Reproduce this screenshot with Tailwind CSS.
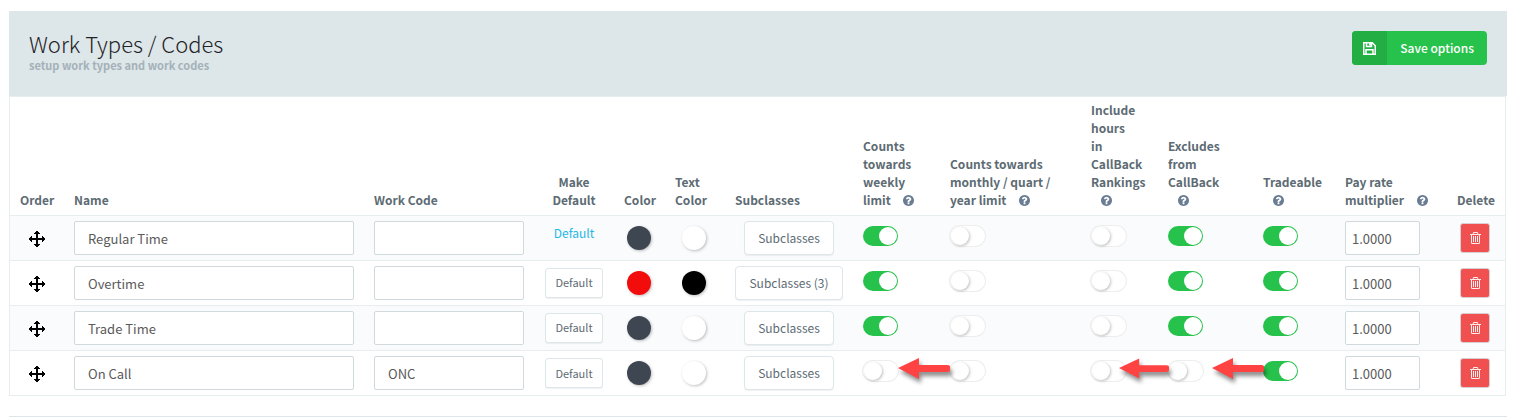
<!DOCTYPE html>
<html lang="en">
<head>
  <meta charset="UTF-8">
  <meta name="viewport" content="width=device-width, initial-scale=1.0">
  <title>Work Types / Codes</title>
  <script src="https://cdn.jsdelivr.net/npm/@tailwindcss/browser@4"></script>
</head>
<body class="bg-white font-['Source_Sans_Pro','Noto_Sans_CJK_SC',sans-serif] text-[#5d6b73] overflow-x-hidden">
  <!-- Shared icons -->
  <svg class="hidden">
    <symbol id="icon-help" viewBox="0 0 1536 1536">
      <path d="M896 1248v-192q0-14-9-23t-23-9H672q-14 0-23 9t-9 23v192q0 14 9 23t23 9h192q14 0 23-9t9-23zm256-672q0-88-55.500-163T958 297t-170-41q-243 0-371 213-15 24 8 42l132 100q7 6 19 6 16 0 25-12 53-68 86-92 34-24 86-24 48 0 85.500 26t37.500 59q0 38-20 61t-68 45q-63 28-115.500 86.500T640 892v36q0 14 9 23t23 9h192q14 0 23-9t9-23q0-19 21.500-49.500T972 829q32-18 49-28.500t46-35 44.500-48 28-60.500 12.500-81zm384 192q0 209-103 385.500T1153.500 1433 768 1536t-385.500-103T103 1153.500 0 768t103-385.500T382.500 103 768 0t385.500 103T1433 382.500 1536 768z" fill="currentColor"/>
    </symbol>
    <symbol id="icon-move" viewBox="0 0 16 16">
      <path d="M7 0h2v1h1v1h1v1H9v4h4V5h1v1h1v1h1v2h-1v1h-1v1h-1V9H9v4h2v1h-1v1H9v1H7v-1H6v-1H5v-1h2V9H3v2H2v-1H1V9H0V7h1V6h1V5h1v2h4V3H5V2h1V1h1z" fill="currentColor"/>
    </symbol>
    <symbol id="icon-trash" viewBox="0 0 11 12">
      <path d="M3.500 0h4l1 2H11v1h-1v7.500Q10 12 8.700 12H2.300Q1 12 1 10.500V3H0V2h2.500zM4 1l-.5 1h4L7 1zM2 3v8h7V3z" fill="currentColor" fill-rule="evenodd"/>
      <path d="M3 4h1v6H3zM5 4h1v6H5zM7 4h1v6H7z" fill="currentColor"/>
    </symbol>
    <symbol id="icon-arrow" viewBox="0 0 52 24">
      <path d="M0 11L21 1v7h28a3.500 3.500 0 0 1 0 7H21v7z" fill="#ff4343"/>
    </symbol>
  </svg>

  <main class="mt-[11px] ml-[9px] mr-[10px]">
    <header class="bg-[#dde6e9] h-[85px] px-5 flex items-start justify-between">
      <div class="pt-[17px]">
        <h1 class="text-[22px] leading-[30px] font-extralight text-[#1f2326]">Work Types / Codes</h1>
        <p class="text-[11px] leading-[14px] font-bold text-[#a4b1b8]">setup work types and work codes</p>
      </div>
      <button type="button" class="mt-5 h-[34px] flex rounded-[4px] overflow-hidden bg-[#27c24c] text-white text-[12px] font-medium">
        <span class="w-[35px] h-full bg-[#23ae44] flex items-center justify-center">
          <svg class="w-[13px] h-[13px]" viewBox="0 0 13 13"><path d="M.75.75h8.500l3 3v8.500H.75zM3.500 1v3.500h5V1M3 12V7.750h7V12" fill="none" stroke="currentColor" stroke-width="1.500"/><path d="M6 1h2v2.500H6z" fill="currentColor"/></svg>
        </span>
        <span class="px-[13px] leading-[34px]">Save options</span>
      </button>
    </header>

    <div class="mr-px border border-[#e8edef]">
      <table class="w-full table-fixed border-collapse">
        <colgroup>
          <col class="w-[54px]"><col class="w-[300px]"><col class="w-[170px]"><col class="w-[80px]"><col class="w-[51px]"><col class="w-[60px]"><col class="w-[128px]"><col class="w-[87px]"><col class="w-[141px]"><col class="w-[77px]"><col class="w-[95px]"><col class="w-[82px]"><col class="w-[112px]"><col class="w-[58px]">
        </colgroup>
        <thead>
          <tr class="h-[118px] text-left align-bottom text-[12px] leading-[18px] whitespace-nowrap">
            <th class="px-[10px] pb-[6px] font-bold">Order</th>
            <th class="px-[10px] pb-[6px] font-bold">Name</th>
            <th class="px-[10px] pb-[6px] font-bold">Work Code</th>
            <th class="px-[10px] pb-[6px] font-bold text-center">Make<br>Default</th>
            <th class="px-[10px] pb-[6px] font-bold">Color</th>
            <th class="px-[10px] pb-[6px] font-bold">Text<br>Color</th>
            <th class="px-[10px] pb-[6px] font-bold">Subclasses</th>
            <th class="px-[10px] pb-[6px] font-bold">Counts<br>towards<br>weekly<br>limit <svg class="inline w-[11px] h-[11px] ml-[10px] -mt-[2px] text-[#6a7d93]"><use href="#icon-help"/></svg></th>
            <th class="px-[10px] pb-[6px] font-bold">Counts towards<br>monthly / quart /<br>year limit <svg class="inline w-[11px] h-[11px] ml-[10px] -mt-[2px] text-[#6a7d93]"><use href="#icon-help"/></svg></th>
            <th class="px-[10px] pb-[6px] font-bold">Include<br>hours<br>in<br>CallBack<br>Rankings<br><svg class="inline w-[11px] h-[11px] ml-[10px] -mt-[2px] text-[#6a7d93]"><use href="#icon-help"/></svg></th>
            <th class="px-[10px] pb-[6px] font-bold">Excludes<br>from<br>CallBack<br><svg class="inline w-[11px] h-[11px] ml-[10px] -mt-[2px] text-[#6a7d93]"><use href="#icon-help"/></svg></th>
            <th class="px-[10px] pb-[6px] font-bold">Tradeable<br><svg class="inline w-[11px] h-[11px] ml-[10px] -mt-[2px] text-[#6a7d93]"><use href="#icon-help"/></svg></th>
            <th class="px-[10px] pb-[6px] font-bold">Pay rate<br>multiplier <svg class="inline w-[11px] h-[11px] ml-[10px] -mt-[2px] text-[#6a7d93]"><use href="#icon-help"/></svg></th>
            <th class="px-[10px] pb-[6px] font-bold">Delete</th>
          </tr>
        </thead>
        <tbody id="work-types"></tbody>
      </table>
    </div>
    <hr class="mt-5 border-[#dde6e9]">
  </main>

  <script>
    const workTypes = [
      { name: 'Regular Time', code: '', isDefault: true, color: '#3e4751', text: '#ffffff', subclasses: 'Subclasses', flags: [1, 0, 0, 1, 1], arrows: [] },
      { name: 'Overtime', code: '', color: '#f20c0c', text: '#000000', subclasses: 'Subclasses (3)', flags: [1, 0, 0, 1, 1], arrows: [] },
      { name: 'Trade Time', code: '', color: '#3e4751', text: '#ffffff', subclasses: 'Subclasses', flags: [1, 0, 0, 1, 1], arrows: [] },
      { name: 'On Call', code: 'ONC', color: '#3e4751', text: '#ffffff', subclasses: 'Subclasses', flags: [0, 0, 0, 0, 1], arrows: ['left-[35px] w-[52px]', '', 'left-[28px] w-[50px]', 'left-[44px] w-[52px]', ''] }
    ];
    const flagNames = ['Counts towards weekly limit', 'Counts towards monthly / quart / year limit', 'Include hours in CallBack Rankings', 'Excludes from CallBack', 'Tradeable'];

    const swatch = (label, value) => `
      <button type="button" aria-label="${label}" class="block w-6 h-6 rounded-full shadow-[1px_1px_3px_rgba(0,0,0,0.25)]" style="background-color: ${value}"></button>`;

    const toggle = (label, on, arrow) => `
      <td class="px-[10px] pt-[10px] align-top">
        <div class="relative">
          <input type="checkbox" aria-label="${label}" ${on ? 'checked' : ''} class="appearance-none block w-[35px] h-5 p-px rounded-full bg-white shadow-[0_0_0_1px_#eeeeee] checked:bg-[#27c24c] checked:shadow-none before:block before:w-[18px] before:h-[18px] before:rounded-full before:bg-white before:shadow-[1px_1px_3px_rgba(0,0,0,0.25)] checked:before:ml-[15px] checked:before:shadow-none">
          ${arrow ? `<svg class="absolute z-10 -top-[4px] h-6 overflow-visible drop-shadow-[2px_4px_2px_rgba(0,0,0,0.45)] ${arrow}" preserveAspectRatio="none"><use href="#icon-arrow"/></svg>` : ''}
        </div>
      </td>`;

    document.getElementById('work-types').innerHTML = workTypes.map(row => `
      <tr class="h-[45px] border-t border-[#e8edef] odd:bg-[#fafbfc] align-middle">
        <td class="px-[10px]"><svg class="w-4 h-4 mx-auto mt-[2px] text-black"><use href="#icon-move"/></svg></td>
        <td class="px-[10px]"><input type="text" aria-label="Name" value="${row.name}" class="block w-full h-[34px] px-[13px] pt-[2px] border border-[#d0d9dc] rounded-[2px] bg-white text-[13px] text-[#5a5a5a]"></td>
        <td class="px-[10px]"><input type="text" aria-label="Work Code" value="${row.code}" class="block w-full h-[34px] px-[13px] pt-[2px] border border-[#d0d9dc] rounded-[2px] bg-white text-[13px] text-[#5a5a5a]"></td>
        <td class="text-center">${row.isDefault
          ? '<a href="#" class="block pb-[10px] text-[12px] leading-[18px] text-[#23b7e5]">Default</a>'
          : '<button type="button" class="h-[30px] w-[58px] block mx-auto border border-[#dde6e9] rounded-[3px] bg-white text-[11px] shadow-[0_1px_1px_rgba(0,0,0,0.06)]">Default</button>'}</td>
        <td class="px-[13px]">${swatch('Color', row.color)}</td>
        <td class="px-[17px]">${swatch('Text color', row.text)}</td>
        <td><button type="button" class="block mx-auto h-[34px] px-[13px] border border-[#dde6e9] rounded-[4px] bg-white text-[12px] shadow-[0_1px_1px_rgba(0,0,0,0.06)]">${row.subclasses}</button></td>
        ${row.flags.map((on, i) => toggle(flagNames[i], on, row.arrows[i])).join('')}
        <td class="px-[10px]"><input type="text" aria-label="Pay rate multiplier" value="1.0000" class="block w-[75px] h-[34px] px-[6px] pt-[2px] border border-[#d0d9dc] rounded-[2px] bg-white text-[13px] text-[#5a5a5a]"></td>
        <td class="px-[13px]"><button type="button" aria-label="Delete" class="w-[30px] h-[30px] flex items-center justify-center border border-[#d9cfd2] rounded-[3px] bg-[#f05050] text-white/90"><svg class="w-[11px] h-3"><use href="#icon-trash"/></svg></button></td>
      </tr>`).join('');
  </script>
</body>
</html>
